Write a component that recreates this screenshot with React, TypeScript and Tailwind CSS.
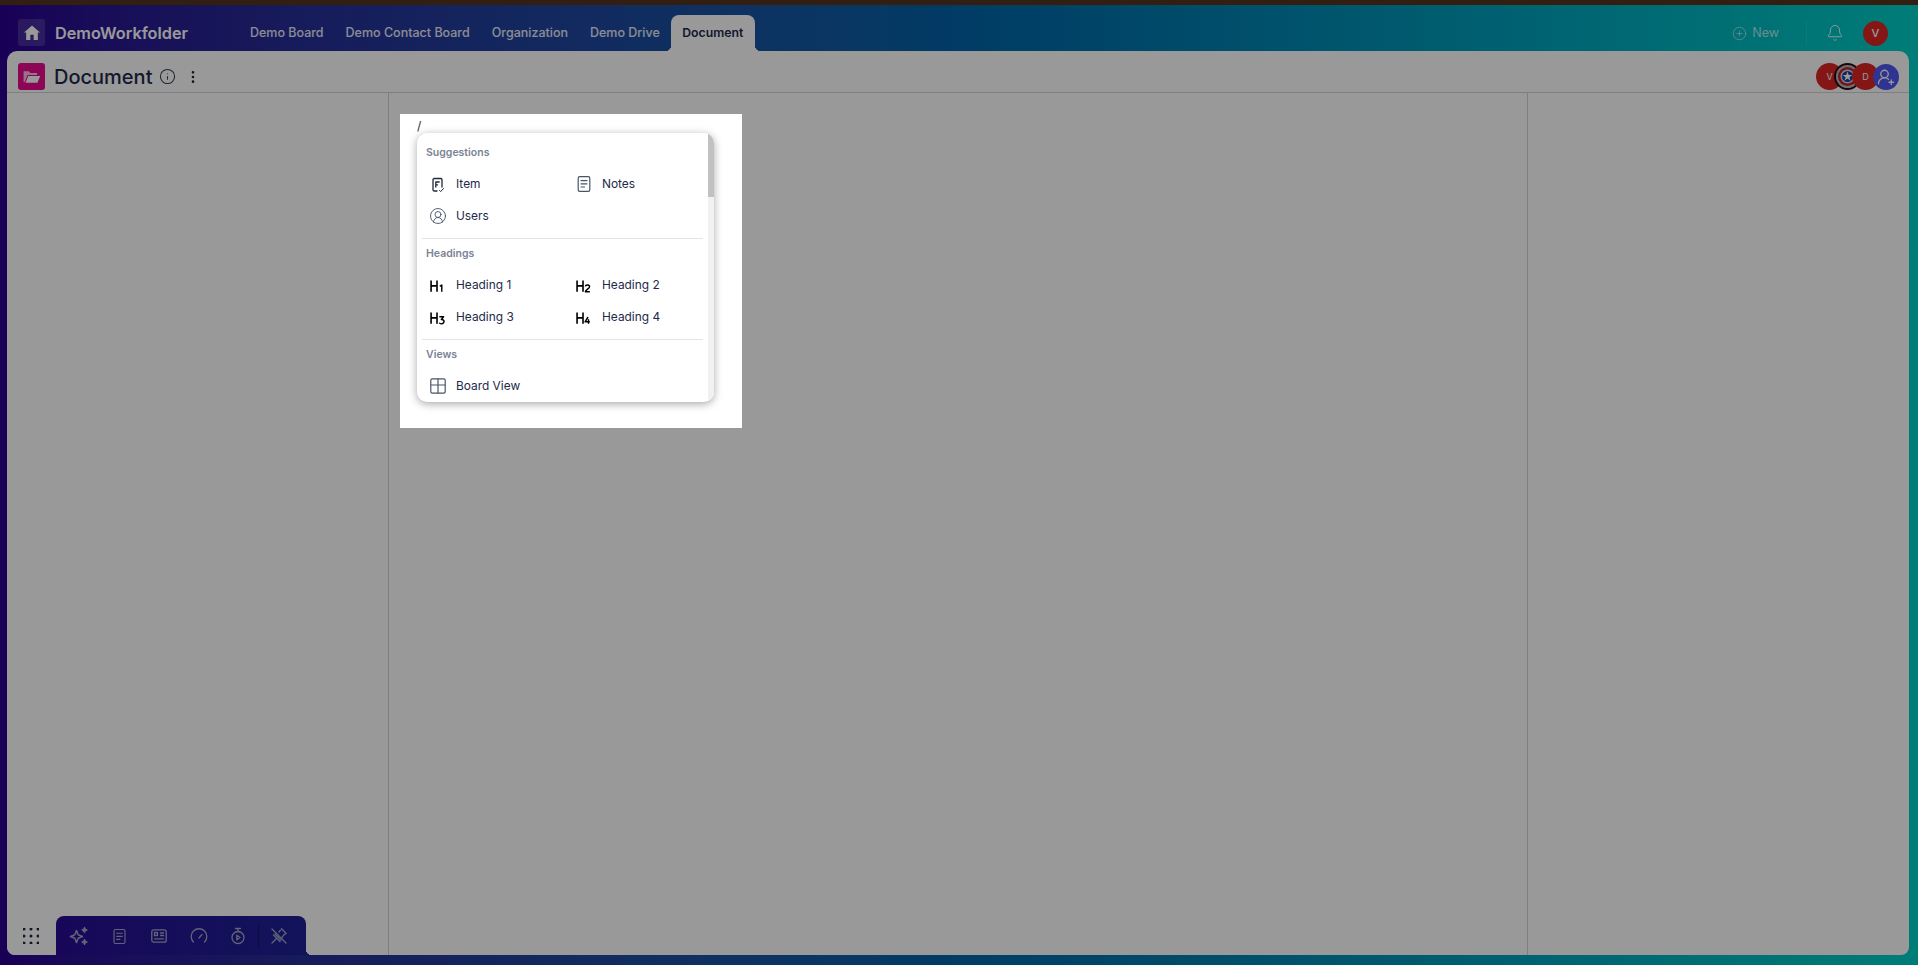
import { Bell, CirclePlus, EllipsisVertical, Info, UserRoundPlus, CircleUserRound } from "lucide-react";
import type { ReactNode } from "react";

const tabs = ["Demo Board", "Demo Contact Board", "Organization", "Demo Drive"];

function ItemIcon() {
  return (
    <svg width="18" height="18" viewBox="0 0 18 18" fill="none" stroke="#1e293b" strokeWidth="1.3" strokeLinecap="round" strokeLinejoin="round">
      <path d="M8 16H5.200A1.200 1.200 0 0 1 4 14.800V4.700A1.200 1.200 0 0 1 5.200 3.500h6.600A1.200 1.200 0 0 1 13 4.700V12" />
      <path d="M6.800 7h3.400M6.800 9.800h1.800M6.800 7v5" />
      <path d="M10.500 15.400l1.200 1.200 2.800-3.100" strokeWidth="1" />
    </svg>
  );
}

function NotesIcon({ size = 18, color = "#475569" }: { size?: number; color?: string }) {
  return (
    <svg width={size} height={size} viewBox="0 0 18 18" fill="none" stroke={color} strokeWidth="1.2" strokeLinecap="round" strokeLinejoin="round">
      <rect x="3.200" y="1.600" width="11.600" height="14.800" rx="1.600" />
      <path d="M6 5.600h6M6 8.800h6M6 12h3.600" />
    </svg>
  );
}

function BoardIcon() {
  return (
    <svg width="18" height="18" viewBox="0 0 18 18" fill="none" stroke="#475569" strokeWidth="1.200" strokeLinejoin="round">
      <rect x="1.800" y="1.800" width="14.400" height="14.400" rx="1.400" />
      <path d="M1.800 8h14.400M9 1.800v14.400" />
    </svg>
  );
}

function HeadingIcon({ digit }: { digit: string }) {
  return (
    <svg width="20" height="18" viewBox="0 0 20 18" fill="none" stroke="#000" strokeWidth="1.800" strokeLinecap="butt" strokeLinejoin="round">
      <path d="M2.300 4v12.600M8.900 4v12.600M2.300 10h6.600" />
      <path d={digit} strokeWidth="1.600" />
    </svg>
  );
}

function Row({ icon, label }: { icon: ReactNode; label: string }) {
  return (
    <div className="flex h-8 items-center">
      <span className="flex w-[18px] items-center justify-start">{icon}</span>
      <span className="ml-[9px] text-[11.9px] leading-none text-[#1e2a4a]">{label}</span>
    </div>
  );
}

function Label({ children }: { children: ReactNode }) {
  return <div className="ml-[4px] flex h-[20px] items-center text-[10.5px] font-semibold text-[#7a8394]">{children}</div>;
}

function Tool({ children }: { children: ReactNode }) {
  return <span className="flex w-[40px] items-center justify-center">{children}</span>;
}

const stroke = { fill: "none", stroke: "#a3a6c6", strokeWidth: 1.3, strokeLinecap: "round", strokeLinejoin: "round" } as const;

export default function App() {
  return (
    <div className="relative flex h-[965px] w-[1918px] flex-col overflow-hidden font-['Inter',sans-serif]">
      <div className="h-[5px] bg-[#54341e]" />
      <div className="flex flex-1 flex-col bg-gradient-to-r from-[#2a0090] via-[#0064a8] to-[#00d0c8]">
        <header className="flex h-[46px] items-stretch pl-[18px] pr-[30px]">
          <div className="mt-[14px] flex h-[27px] w-[27px] items-center justify-center rounded-[3px] bg-white/15">
            <svg width="20" height="20" viewBox="0 0 24 24" fill="white"><path d="M10 20.500v-6.500h4v6.500h5v-9h2.600L12 3 2.400 11.500H5v9z" /></svg>
          </div>
          <div className="ml-[10px] mt-[15px] text-[16.25px] font-semibold leading-[26px] text-white">DemoWorkfolder</div>
          <nav className="ml-[51px] flex items-stretch text-[12.5px] font-medium text-white/90">
            {tabs.map((t) => (
              <div key={t} className="flex items-center px-[11px] pt-[10px]">{t}</div>
            ))}
            <div className="relative mt-[10px] flex w-[84px] items-center justify-center rounded-t-[8px] bg-white pt-[1px] text-[12.25px] font-semibold text-[#1e2a4a]">
              Document
              <span className="absolute bottom-0 -left-[6px] h-[6px] w-[6px] bg-[radial-gradient(circle_at_0_0,transparent_6px,white_6.5px)]" />
              <span className="absolute bottom-0 -right-[6px] h-[6px] w-[6px] bg-[radial-gradient(circle_at_100%_0,transparent_6px,white_6.5px)]" />
            </div>
          </nav>
          <div className="ml-auto flex items-center pt-[10px] text-white/70">
            <CirclePlus size={15} strokeWidth={1.25} />
            <span className="ml-[5px] text-[12.5px] font-normal">New</span>
            <span className="ml-[27px] h-[26px] w-px bg-white/10" />
            <Bell size={18} strokeWidth={1.25} className="ml-[19px] text-white" />
            <span className="ml-[19px] flex h-[25px] w-[25px] items-center justify-center rounded-full bg-[#dc2626] text-[11px] font-medium text-white">V</span>
          </div>
        </header>

        <main className="ml-[7px] mr-[9px] flex flex-1 flex-col rounded-t-[10px] rounded-b-[8px] bg-white">
          <div className="flex h-[42px] items-start border-b border-[#d4d4d8] pl-[11px] pr-[10px] pt-[12px]">
            <span className="flex h-[27px] w-[27px] items-center justify-center rounded-[3px] bg-[#ec0b8e]">
              <svg width="19" height="19" viewBox="0 0 24 24" fill="#f9c3e0">
                <path d="M2 5.500h6.500l2 2H19v2.500H7L3.500 19H2z" />
                <path d="M7.800 11.500H23l-3.500 8.500H4.500z" fill="white" />
              </svg>
            </span>
            <h1 className="ml-[9px] mt-[2px] text-[20px] font-medium leading-[24px] text-[#1e2a4a]">Document</h1>
            <Info size={17} strokeWidth={1.5} className="ml-[7px] mt-[5px] text-[#334155]" />
            <EllipsisVertical size={16} strokeWidth={2} className="ml-[9px] mt-[6px] text-[#1e293b]" />
            <div className="ml-auto flex items-center">
              <span className="flex h-[27px] w-[27px] items-center justify-center rounded-full bg-[#dc2626] text-[9px] text-white">V</span>
              <svg width="27" height="27" viewBox="0 0 27 27" className="-ml-[9px]">
                <circle cx="13.500" cy="13.500" r="13.500" fill="#2a0a10" />
                <circle cx="13.500" cy="13.500" r="11.500" fill="#b8bac4" />
                <circle cx="13.500" cy="13.500" r="9.500" fill="#c0202a" />
                <circle cx="13.500" cy="13.500" r="7" fill="#d5d6dc" />
                <circle cx="13.500" cy="13.500" r="5.500" fill="#1d3ea8" />
                <polygon points="13.500,8.500 14.700,12 18.300,12 15.400,14.200 16.500,17.700 13.500,15.500 10.500,17.700 11.600,14.200 8.700,12 12.300,12" fill="#fff" />
              </svg>
              <span className="-ml-[9px] flex h-[27px] w-[27px] items-center justify-center rounded-full bg-[#dc2626] text-[9px] text-white">D</span>
              <span className="-ml-[6px] flex h-[26px] w-[26px] items-center justify-center rounded-full bg-[#4f58f0] text-white">
                <UserRoundPlus size={18} strokeWidth={1.75} />
              </span>
            </div>
          </div>
          <div className="flex flex-1">
            <div className="w-[382px] border-r border-[#d4d4d8]" />
            <div className="flex-1" />
            <div className="w-[382px] border-l border-[#d4d4d8]" />
          </div>
        </main>
        <div className="h-[10px]" />
      </div>

      {/* bottom dock sits over the panel, under the dimming layer */}
      <div className="absolute bottom-[10px] left-[7px] flex h-[39px] items-stretch">
        <div className="flex w-[48px] items-center justify-center rounded-b-[8px] bg-white">
          <svg width="16" height="16" viewBox="0 0 16 16" fill="#1e293b">
            {[1, 8, 15].map((y) => [1, 8, 15].map((x) => <circle key={`${x}-${y}`} cx={x} cy={y} r="1.500" />))}
          </svg>
        </div>
        <div className="relative ml-[1px] flex w-[250px] items-center rounded-t-[8px] bg-gradient-to-r from-[#280c94] to-[#1d2098] pl-[3px] pt-[1px]">
          <Tool>
            <svg width="20" height="20" viewBox="0 0 20 20" {...stroke}>
              <path d="M7.500 4.500l1.700 4.300 4.300 1.700-4.300 1.700-1.700 4.300-1.700-4.300L1.500 10.500l4.300-1.700z" strokeWidth="1.500" />
              <path d="M15.500 1.500l.8 1.700 1.700.8-1.700.8-.8 1.700-.8-1.700-1.700-.8 1.700-.8z" fill="#a3a6c6" />
              <path d="M15.500 13.500l.8 1.700 1.700.8-1.700.8-.8 1.700-.8-1.700-1.700-.8 1.700-.8z" fill="#a3a6c6" />
            </svg>
          </Tool>
          <Tool><NotesIcon size={17} color="#a3a6c6" /></Tool>
          <Tool>
            <svg width="18" height="18" viewBox="0 0 18 18" {...stroke}>
              <rect x="1.800" y="2.800" width="14.400" height="12.400" rx="2" />
              <rect x="4.500" y="5.500" width="3" height="3" />
              <path d="M10.500 6h3M10.500 8.500h3M4.500 11.800h9" />
            </svg>
          </Tool>
          <Tool>
            <svg width="18" height="18" viewBox="0 0 18 18" {...stroke}>
              <path d="M3.400 15a7.800 7.800 0 1 1 11.200 0" />
              <path d="M9 11l3-3.500" />
            </svg>
          </Tool>
          <span className="flex w-[38px] items-center justify-center">
            <svg width="16" height="18" viewBox="0 0 16 18" {...stroke}>
              <circle cx="8" cy="10.500" r="6" />
              <path d="M5.500 1.500h5M8 1.500v3" />
              <path d="M6.800 8.200l3.200 2.300-3.200 2.300z" />
            </svg>
          </span>
          <span className="ml-[1px] h-[26px] w-px bg-black/30" />
          <span className="flex w-[40px] items-center justify-center">
            <svg width="18" height="18" viewBox="0 0 18 18" {...stroke}>
              <path d="M2 2l14 14" />
              <path d="M11.500 1.800l4.700 4.700-2.200 1.200-2.300 3.300M9 5l1.500-1.700" />
              <path d="M5 7l6 6M3.500 8l6.500 6.500M6.500 11.500L2 16" />
            </svg>
          </span>
        </div>
        <span className="self-end h-[6px] w-[6px] bg-[radial-gradient(circle_at_100%_0,transparent_6px,#1d2098_6.5px)]" />
      </div>

      {/* modal dim */}
      <div className="absolute inset-0 bg-black/40" />

      {/* editor block raised above the dim */}
      <div className="absolute left-[400px] top-[114px] h-[314px] w-[342px] bg-white pl-[17px] pt-[5px] text-[12px] text-[#1e2a4a]">
        <div className="leading-[14px]">/</div>
      </div>
      <div className="absolute left-[417px] top-[133px] flex h-[269px] w-[297px] overflow-hidden rounded-[10px] bg-white shadow-[0_2px_8px_rgba(0,0,0,0.35)]">
        <div className="flex-1 overflow-hidden px-[5px] pt-[10px]">
          <Label>Suggestions</Label>
          <div className="mt-[5px] grid grid-cols-[146px_1fr] pl-[7px]">
            <Row icon={<ItemIcon />} label="Item" />
            <Row icon={<NotesIcon />} label="Notes" />
            <Row icon={<CircleUserRound size={18} strokeWidth={1.2} className="text-[#475569]" />} label="Users" />
          </div>
          <div className="mt-[6px] border-t border-[#e2e4e8]" />
          <div className="mt-[5px]"><Label>Headings</Label></div>
          <div className="mt-[5px] grid grid-cols-[146px_1fr] pl-[7px]">
            <Row icon={<HeadingIcon digit="M12 10.500l2.200-1.500v7.600" />} label="Heading 1" />
            <Row icon={<HeadingIcon digit="M11.500 10.500c.4-2.200 4.700-2.200 4.700.5 0 1.800-4.700 3.400-4.700 5.600h5" />} label="Heading 2" />
            <Row icon={<HeadingIcon digit="M11.500 8.800h4.700l-2.500 3c2 0 3 1 3 2.300 0 2.700-4.300 3.300-5.300 1.300" />} label="Heading 3" />
            <Row icon={<HeadingIcon digit="M14.500 9l-3.300 5.300h5.300M15 11.500v5.100" />} label="Heading 4" />
          </div>
          <div className="mt-[6px] border-t border-[#e2e4e8]" />
          <div className="mt-[5px]"><Label>Views</Label></div>
          <div className="mt-[5px] grid grid-cols-[146px_1fr] pl-[7px]">
            <Row icon={<BoardIcon />} label="Board View" />
          </div>
        </div>
        <div className="w-[6px] bg-[#f1f1f1]">
          <div className="h-[64px] bg-[#c1c1c1]" />
        </div>
      </div>
    </div>
  );
}
